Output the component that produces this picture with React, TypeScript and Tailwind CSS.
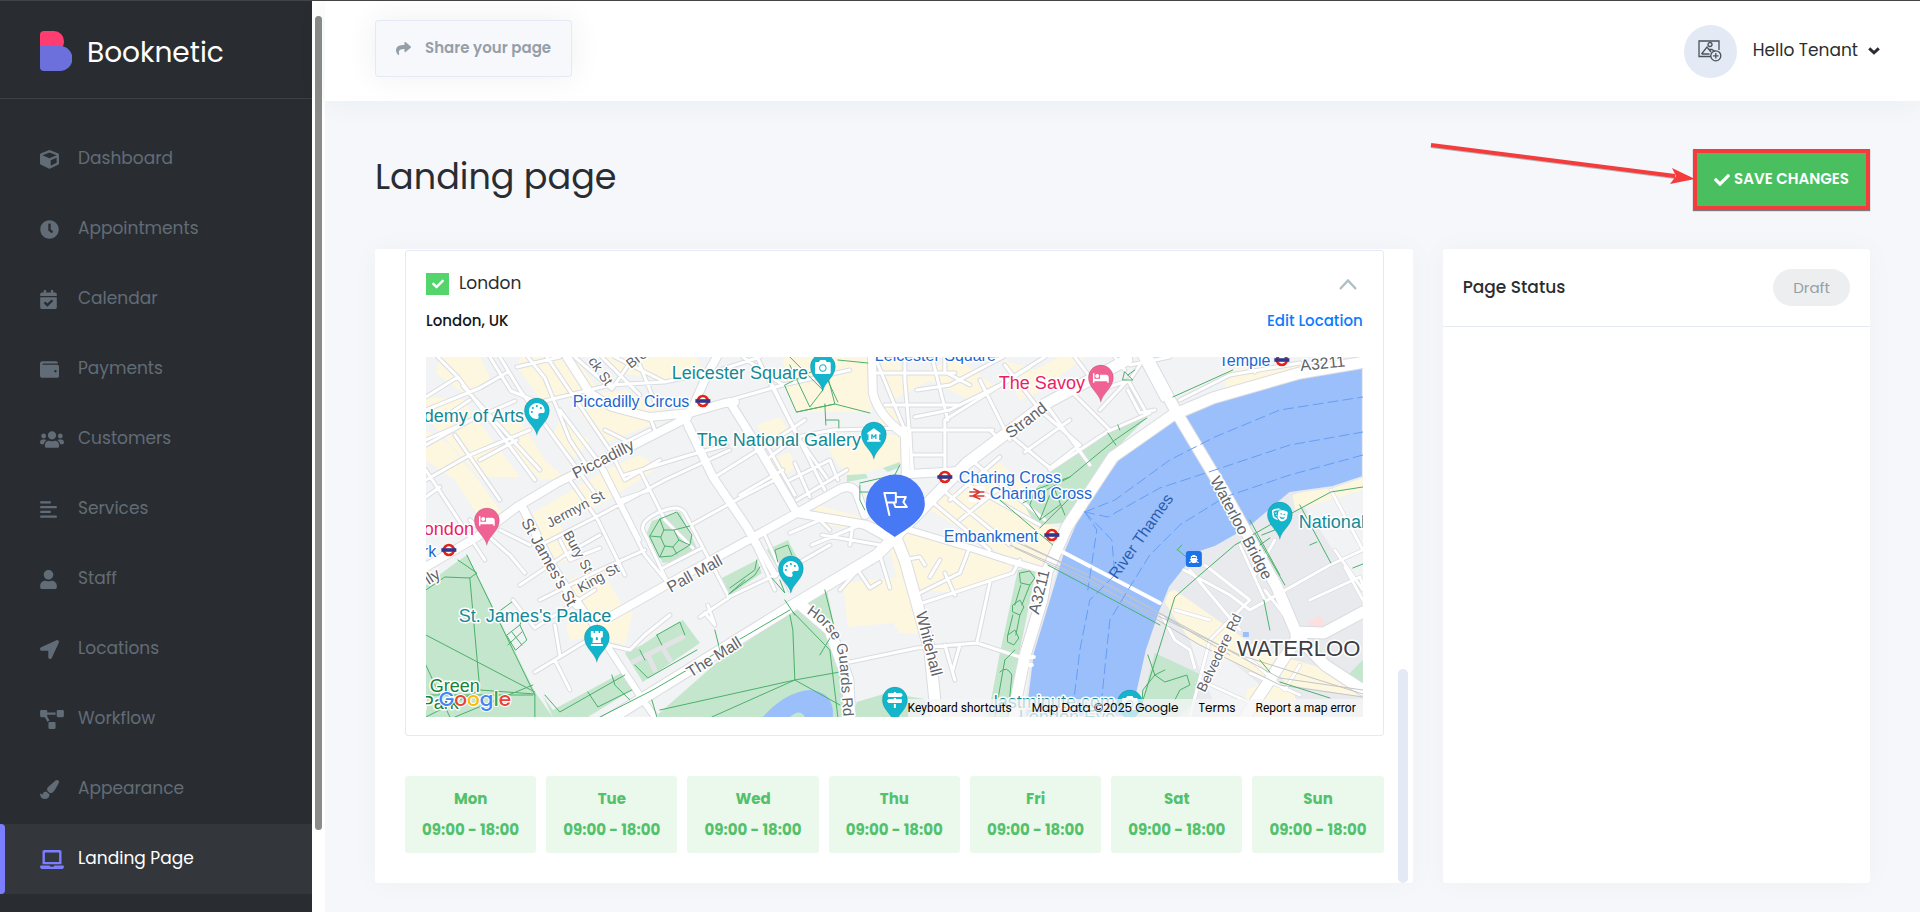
import React, { useState } from 'react';
import type { IconType } from 'react-icons';
import {
  FaAlignLeft,
  FaBed,
  FaCalendarCheck,
  FaCamera,
  FaCheck,
  FaChessRook,
  FaClock,
  FaCube,
  FaLaptop,
  FaLocationArrow,
  FaMapSigns,
  FaPaintBrush,
  FaPalette,
  FaProjectDiagram,
  FaShare,
  FaShip,
  FaTheaterMasks,
  FaUser,
  FaUsers,
  FaWallet,
} from 'react-icons/fa';
import { MdMuseum } from 'react-icons/md';

interface NavItem {
  label: string;
  icon: IconType;
  iconWidth: string;
}

const NAV_ITEMS: NavItem[] = [
  { label: 'Dashboard', icon: FaCube, iconWidth: 'w-[19px]' },
  { label: 'Appointments', icon: FaClock, iconWidth: 'w-[19px]' },
  { label: 'Calendar', icon: FaCalendarCheck, iconWidth: 'w-[17px]' },
  { label: 'Payments', icon: FaWallet, iconWidth: 'w-[19px]' },
  { label: 'Customers', icon: FaUsers, iconWidth: 'w-6' },
  { label: 'Services', icon: FaAlignLeft, iconWidth: 'w-[17px]' },
  { label: 'Staff', icon: FaUser, iconWidth: 'w-[17px]' },
  { label: 'Locations', icon: FaLocationArrow, iconWidth: 'w-[19px]' },
  { label: 'Workflow', icon: FaProjectDiagram, iconWidth: 'w-6' },
  { label: 'Appearance', icon: FaPaintBrush, iconWidth: 'w-[19px]' },
  { label: 'Landing Page', icon: FaLaptop, iconWidth: 'w-6' },
];

const WEEK_DAYS = ['Mon', 'Tue', 'Wed', 'Thu', 'Fri', 'Sat', 'Sun'];

const Logo = () => (
  <a href="#" className="flex items-center gap-[15px]">
    <svg width="32" height="40" viewBox="0 0 32 40" aria-hidden="true">
      <path d="M4 0h10a10 10 0 0 1 10 10c0 2-.4 4-1.400 6H0V4a4 4 0 0 1 4-4z" fill="#ff3d71" />
      <path d="M0 15h20a12.400 12.400 0 0 1 0 25H4a4 4 0 0 1-4-4z" fill="#6c70dc" />
    </svg>
    <span className="pt-1 text-[28px] leading-8 text-white">Booknetic</span>
  </a>
);

const Sidebar = ({ active, onSelect }: { active: string; onSelect: (_label: string) => void }) => (
  <aside className="flex shrink-0 bg-white">
    <div className="w-[312px] overflow-hidden bg-[#292d32]">
      <div className="flex h-[98px] items-center border-b border-[#3b4045] pb-3.5 pt-4 pl-10">
        <Logo />
      </div>
      <nav className="mt-[25px]">
        {NAV_ITEMS.map(({ label, icon: Icon, iconWidth }) => {
          const isActive = label === active;
          return (
            <a
              key={label}
              href="#"
              onClick={() => onSelect(label)}
              className={`relative flex h-[70px] items-center pl-10 text-[17px] ${
                isActive ? 'bg-[#33373c] text-white' : 'text-[#626c76]'
              }`}
            >
              {isActive && <span className="absolute inset-y-0 left-0 w-[5px] rounded-r bg-[#7b7fff]" />}
              <span className="w-[38px]">
                <Icon className={`h-[19px] ${iconWidth} ${isActive ? 'text-[#7b7fff]' : ''}`} />
              </span>
              {label}
            </a>
          );
        })}
      </nav>
    </div>
    <div className="w-[13px] pl-[3px] pt-[15px]">
      <div className="h-[814px] w-[7px] rounded-full bg-[#8b8b8b]" />
    </div>
  </aside>
);

const TopBar = () => (
  <header className="relative z-10 flex h-[100px] shrink-0 items-center justify-between bg-white pl-[50px] pr-10 shadow-[0_0_30px_rgba(41,45,50,0.060)]">
    <button className="mb-1.5 flex h-[57px] items-center gap-3.5 rounded-[3px] border border-[#e3eaf5] bg-[#f7f8fc] px-5 text-[15px] font-semibold text-[#949fa8] shadow-[0_0_30px_rgba(41,45,50,0.080)]">
      <FaShare className="size-[15px]" />
      Share your page
    </button>
    <button className="flex items-center gap-4 text-[17px] text-[#292d32]">
      <span className="flex size-[53px] items-center justify-center rounded-full bg-[#e3eaf5]">
        <svg width="24" height="22" viewBox="0 0 24 22" fill="none" stroke="#4b5158" strokeWidth="1.300">
          <path d="M13 16.500H1V1h20v9" />
          <path d="M3.500 14l5.500-7 4 5M3.500 14h8M11 9.500l3 0 3 2" />
          <circle cx="12" cy="4.500" r="2" />
          <circle cx="17.800" cy="15.800" r="5" />
          <path d="M17.800 13v5.600M15 15.800h5.600" />
        </svg>
      </span>
      <span className="flex items-center gap-2.5">
        Hello Tenant
        <svg width="12" height="8" viewBox="0 0 12 8" fill="none" stroke="currentColor" strokeWidth="3">
          <path d="M1.200 1.400L6 5.800l4.800-4.400" />
        </svg>
      </span>
    </button>
  </header>
);

// Map geometry, grouped by the way each kind of shape is painted
const PARKS = [
  'M426 585L450 567L467 555L485 590L535 692L553 717H426Z',
  'M827 590L800 606L720 660L655 717H848L845 680L836 635Z',
  'M647 533L652 521L680 512L697 548L683 560L663 563Z',
  'M722 578L757 560L762 573L730 595Z',
  'M767 550L788 540L800 563L777 567Z',
  'M657 635L683 620L700 643L643 682L625 653L642 645Z',
  'M543 696L553 710L623 672L637 687L588 717H553Z',
  'M1147 417L1107 430L1053 470L1023 503L1036 525L1063 523L1087 493L1113 452Z',
  'M1018 570L1037 567L1020 650L1008 717H988L1000 653Z',
  'M1155 653L1202 675L1195 702L1178 717H1138Z',
  'M857 702L887 693L925 699V717H852Z',
  'M1343 680L1363 660V682L1350 684Z',
  'M847 475L866 474L868 478L847 482ZM883 468L900 462V467L888 472Z',
].join('');

const COMMERCIAL = [
  'M440 357H480L492 382L462 392L436 373Z',
  'M426 397L463 400L520 477H480L426 417Z',
  'M426 430L450 445L478 480L505 517L482 522L455 480L426 460Z',
  'M521 357H574L597 387L545 405L517 367Z',
  'M570 397L625 390L672 417L604 443L585 420Z',
  'M596 357H697L703 373L665 382L620 372Z',
  'M783 357H870L872 412L797 412L786 390Z',
  'M827 443L907 433L902 463L848 477L833 457Z',
  'M533 513L610 468L640 455L658 468L600 505L560 523L574 560L553 563Z',
  'M570 580L600 567L625 610L603 620L583 610L568 592Z',
  'M566 625L585 615L633 612L625 645L595 637L570 640Z',
  'M957 490L1000 463L1020 480L1040 522L1060 528L1047 567L1000 553L925 507Z',
  'M903 533L1013 557L1010 573L960 593L920 590L907 567Z',
  'M843 583L900 577L913 603L920 634L900 633L893 623L848 627Z',
  'M888 543L900 547L917 603L903 600Z',
  'M817 505L865 518L850 529L812 522Z',
  'M880 357H897L905 378L930 370L955 357L1000 390L970 400L930 380L893 400Z',
  'M873 395L893 410L905 433L880 425Z',
  'M560 420L590 440L575 458L552 437Z',
  'M490 425L520 420L545 460L565 478L540 480Z',
  'M757 425L780 417L795 440L768 447Z',
  'M770 460L790 452L795 468L777 480Z',
  'M1003 360L1035 370L1060 357H1085L1040 392L1020 400Z',
  'M1293 495L1363 470V490L1295 510Z',
  'M1160 595L1190 640L1270 682L1363 697V680L1260 650L1175 590Z',
  'M1247 690L1280 675L1297 700L1285 717H1243Z',
  'M1225 370L1363 358V365L1290 372L1225 392Z',
].join('');

const RIVER =
  'M1363 367L1297 373L1230 393L1183 413L1120 457L1080 513L1063 553L1053 587L1033 653L1025 717H1133L1138 690L1147 650L1160 612L1170 587L1197 553L1215 547L1250 527L1290 493L1333 487L1363 477Z';

const SOUTH_BANK =
  'M1363 477L1333 487L1290 493L1250 527L1197 553L1170 587L1147 650L1133 717H1363Z';

const MINOR_ROADS = [
  'M438 357L458 377L426 397M490 357L511 391L546 405M458 377L535 480M426 410L480 388L508 372M426 440L515 401',
  'M463 386L540 470M500 357L520 390L600 500M517 367L560 357M528 357L545 378L570 440L590 470',
  'M545 401L610 385L665 382L707 373M602 357L640 395M615 357L665 382M575 357L612 389L634 357M640 365L655 402',
  'M426 445L480 415M426 480L470 455L530 430M455 435L500 500M480 460L517 440',
  'M426 470L485 560M426 497L440 487M470 400L440 420M547 357L610 450L625 480M560 410L605 470L640 540',
  'M605 430L625 440L615 460M610 450L650 430M625 480L660 460M650 417L655 430M723 402L783 385L850 370',
  'M757 357L825 490M743 357L783 385M770 380L800 440L827 478M720 370L760 357',
  'M715 477L790 430M740 495L783 470M760 450L805 420M797 500L847 470',
  'M770 457L797 437L833 430L907 428M790 480L830 460L838 480M795 463L810 497M768 447L795 495',
  'M570 480L598 520L625 575M598 463L645 555L668 583M625 475L690 455L727 445M545 543L600 515L665 480L730 450',
  'M520 585L565 555L600 535M560 540L570 560L600 548M540 600L600 570L645 550M640 470L665 520L693 548',
  'M643 530C640 520 660 510 675 508Q683 508 686 515L729 597L790 568L830 545M643 530L668 583M663 568L702 548',
  'M693 524L740 498L775 480M620 500L650 490M470 520L510 555L525 573M500 530L530 545',
  'M513 600L535 628L595 590M535 672L588 640L630 650L645 635L670 615M535 672L555 660L570 690M555 625L560 655',
  'M700 617L730 597M705 613L715 625L708 605M750 535L775 590M765 535L790 590',
  'M790 533L820 520L830 530M812 545L860 525L887 540M822 535L880 545M853 525L850 545M840 590L858 570L870 588L880 582M880 555L890 588',
  'M850 662L917 648L977 643L1020 657M990 583L977 643M920 593L960 573L970 547M917 605L1013 573L1020 560',
  'M902 560L920 557L925 565M945 645L955 680M960 645L953 670M945 573L955 595M930 577L940 560',
  'M874 373L955 373M905 357V380L913 473M932 357L948 420M917 390L950 385L1003 357M875 357L905 430M885 405L960 405M945 357V372L970 385',
  'M915 417L950 410L1000 385L1045 357M945 447V420L993 390L1030 367M907 430H993M913 455H945M912 473L910 430M945 430V473M990 430L1000 440',
  'M980 380L1010 440M1005 365L1040 410L1080 445L1050 468M1010 435L1050 468M1025 452L1070 420M1045 403L1090 465M1065 385L1110 430',
  'M1050 470L1107 432L1150 413M1075 357L1100 390L1130 380L1140 365M1100 410L1128 380L1145 410M1128 390L1140 413L1155 410',
  'M930 500L990 550M943 490L1010 545M960 480L1040 525M975 463L1045 520M950 500L1000 457M960 520L1010 480',
  'M1243 357L1255 372M1130 365L1170 357M1180 400L1230 375L1300 363M1140 357L1163 400M1115 357L1125 370',
].join('');

const SOUTH_ROADS = [
  'M1184 570L1230 595L1250 610L1330 565L1363 550M1250 600L1210 640L1190 717M1265 590L1300 635M1240 545L1265 600M1205 565L1250 600',
  'M1190 570L1240 630M1162 615L1175 640L1190 650L1195 668M1245 655L1285 690L1300 665M1310 600L1360 577L1363 585M1335 550L1363 590',
  'M1331 490L1363 550M1345 567L1363 600M1255 575L1275 540M1175 610L1210 620M1250 673L1300 695M1200 680L1255 705',
].join('');

const MAIN_ROADS = [
  'M426 567L477 537L517 507L557 483L630 447L687 418L693 407L708 373L717 357M567 357L590 393L612 407L650 417L690 413',
  'M690 413L725 403L735 402M730 402L760 450L797 513M688 425L713 477L747 527L757 545M523 508L553 567L577 605',
  'M610 617L670 583L743 543L797 513L840 489Q852 484 857 493L865 515M797 513L867 525L893 537',
  'M872 357L873 393Q878 415 905 435L906 473L900 500M910 474L960 471',
].join('');

const SIDE_ROADS = 'M577 600L643 700L655 717M757 543L775 575M900 527L967 547L1007 560L1048 572';

const ARTERIES = [
  'M605 722L797 603L877 555L900 532L967 463L1047 403L1127 360',
  'M893 530L905 560L917 603L930 650L937 720M1365 362L1300 373L1213 398L1173 415L1113 457L1067 527L1047 572L1042 600L1025 656L1012 720',
  'M1147 357L1177 413L1223 490L1277 587L1296 632L1324 633L1363 612M1296 635L1325 665L1363 690M1296 640L1270 680L1243 720M800 604L830 630L848 680L850 720',
].join('');

const FOOTPATHS = [
  'M426 590L445 577L470 578L477 573L458 560M470 578L480 690M467 555L535 695M535 692L426 635M533 695H426M535 695V717M480 690L426 717M426 665L450 717M480 690L535 694M455 717L533 685',
  'M497 613L512 602M507 635L520 625L527 640L516 650ZM512 632L522 645M508 645L522 632M520 625L523 618',
  'M790 610L653 690L600 717M785 600L795 615M793 612L830 650L838 717M790 615L793 630L795 680L712 717M795 680L660 710M795 680L840 672M795 680L840 705M825 590L835 630L820 655M652 700L657 717',
  'M729 594L755 575L760 567M729 594L745 580M730 588L755 570L757 560M778 562L775 550L788 545L792 555M780 580L785 593L772 578M715 630L720 650',
  'M650 536L660 519L677 512L692 535L690 545L672 556L660 557ZM661 537L664 530L674 530L679 540L673 547L665 546ZM664 530L660 519M674 530L690 526M679 540L690 545M673 547L677 554M665 546L660 557M661 537L650 536',
  'M657 635L680 622L685 635M657 635L662 645M640 650L645 660M635 665L648 678L697 650M545 695L560 712L625 675M588 692L598 707L632 690M612 675L615 685L630 700',
  'M785 385L825 365L835 404L797 412ZM790 365L810 407L823 390L790 357M797 412L835 404L870 413M823 370L838 402M825 404L826 425M826 420H839V428M838 360L868 363',
  'M860 483L895 475L900 465M860 485V500L865 510M860 492H868',
  'M1147 418L1115 440L1070 477L1023 503M1108 433L1116 445M1070 477L1035 490L1030 505L1040 520L1060 505M1050 495L1040 520M1055 490L1065 515M1040 528L1073 495M1000 500L1053 545M1120 430L1118 425',
  'M1020 573L1030 571L1035 578L1030 585L1021 583ZM1021 585L1015 605M1030 585L1022 605M1013 605L1020 600L1024 607L1020 615L1013 612ZM1013 615L1008 635M1020 615L1016 635M1008 635L1015 630L1019 638L1014 645L1008 642ZM1005 660L995 717M1000 672Q1007 665 1012 675L1008 717M1015 650L1005 660',
  'M1048 565L1160 625M1173 397L1233 370M1125 372L1133 380L1123 380ZM1135 370L1128 375',
  'M1363 487L1331 492L1270 525L1235 545L1200 575L1175 597L1162 640L1140 710M1280 575L1250 520M1300 505L1331 563M1255 533L1285 585M1262 535L1275 530M1260 545L1270 538M1310 545L1317 542M1353 568L1363 564',
  'M1148 655L1155 675L1143 690L1142 705M1155 675L1165 682L1187 675L1190 685L1180 690L1175 700M1165 670L1155 675M1178 550L1190 560M1182 545L1177 550M1264 600L1270 630M1260 660L1270 672M1280 682L1330 698',
].join('');

const BOAT_ROUTES = [
  'M1085 512L1115 500L1170 460L1215 437L1280 410L1363 397M1085 512L1108 517L1160 488L1215 470L1290 445L1363 432M1085 512L1097 530L1088 590',
  'M1363 455L1290 475L1225 497L1180 525L1150 555L1130 587L1110 620L1100 717M1085 512L1112 540L1115 575L1090 600L1080 650L1072 717M1363 450',
].join('');

const RAIL = [
  'M1010 545L1090 580L1200 645L1280 685L1363 697M1012 540L1090 576L1210 640L1280 678L1363 690M1015 548L1100 588L1240 655L1363 694M1025 545L1120 590L1230 655',
].join('');

interface PinProps {
  x: number;
  y: number;
  icon: IconType;
  color?: string;
}

const Pin = ({ x, y, icon: Icon, color = '#12b5cb' }: PinProps) => (
  <g transform={`translate(${x} ${y})`}>
    <path
      d="M0 24C-2 15-12.500 10-12.500-.500a12.500 12.500 0 0 1 25 0C12.500 10 2 15 0 24z"
      fill={color}
      stroke="#000"
      strokeOpacity=".2"
      strokeWidth=".6"
    />
    <Icon x={-8} y={-8} size={16} color="#fff" />
  </g>
);

const Tube = ({ x, y }: { x: number; y: number }) => (
  <g transform={`translate(${x} ${y})`}>
    <circle r="5" fill="#fff" stroke="#e1251b" strokeWidth="2.600" />
    <rect x="-7.500" y="-1.800" width="15" height="3.600" fill="#33378c" />
  </g>
);

interface StreetLabel {
  text: string;
  x: number;
  y: number;
  angle: number;
  small?: boolean;
}

const STREETS: StreetLabel[] = [
  { text: 'Piccadilly', x: 576, y: 479, angle: -27 },
  { text: 'lly', x: 429, y: 585, angle: -33 },
  { text: 'ck St', x: 588, y: 361, angle: 55, small: true },
  { text: 'Bre', x: 631, y: 369, angle: -38, small: true },
  { text: "St James's St", x: 521, y: 522, angle: 61 },
  { text: 'Jermyn St', x: 550, y: 528, angle: -28, small: true },
  { text: 'Bury St', x: 563, y: 534, angle: 61, small: true },
  { text: 'King St', x: 581, y: 593, angle: -29, small: true },
  { text: 'Pall Mall', x: 671, y: 593, angle: -29 },
  { text: 'The Mall', x: 691, y: 678, angle: -32 },
  { text: 'Strand', x: 1011, y: 439, angle: -38 },
  { text: 'Whitehall', x: 916, y: 613, angle: 76 },
  { text: 'A3211', x: 1039, y: 615, angle: -76 },
  { text: 'A3211', x: 1301, y: 371, angle: -6 },
  { text: 'Waterloo Bridge', x: 1210, y: 480, angle: 62 },
  { text: 'Belvedere Rd', x: 1205, y: 693, angle: -64, small: true },
];

interface PlaceLabel {
  text: string;
  x: number;
  y: number;
}

const ATTRACTIONS: PlaceLabel[] = [
  { text: 'Leicester Square', x: 672, y: 379 },
  { text: 'demy of Arts', x: 424, y: 422 },
  { text: 'The National Gallery', x: 697, y: 446 },
  { text: "St. James's Palace", x: 459, y: 622 },
  { text: 'National', x: 1299, y: 528 },
  { text: 'lastminute.com', x: 994, y: 708 },
  { text: 'London Eye', x: 1019, y: 723 },
];

const STATIONS: PlaceLabel[] = [
  { text: 'Piccadilly Circus', x: 573, y: 407 },
  { text: 'Leicester Square', x: 875, y: 361 },
  { text: 'Charing Cross', x: 959, y: 483 },
  { text: 'Charing Cross', x: 990, y: 499 },
  { text: 'Embankment', x: 944, y: 542 },
  { text: 'Temple', x: 1219, y: 366 },
  { text: 'rk', x: 423, y: 557 },
];

const HOTELS: PlaceLabel[] = [
  { text: 'The Savoy', x: 999, y: 389 },
  { text: 'ondon', x: 424, y: 535 },
];

const LondonMap = () => (
  <svg
    viewBox="426 357 937 360"
    preserveAspectRatio="xMidYMid slice"
    className="h-[360px] w-full font-['Liberation_Sans',sans-serif]"
    strokeLinejoin="round"
    strokeLinecap="round"
    role="img"
    aria-label="Map of London"
  >
    <rect x="426" y="357" width="937" height="360" fill="#f1f3f4" />
    <path d={SOUTH_BANK} fill="#e8eaed" />
    <path d="M1363 477L1300 500L1340 560L1363 600ZM1190 640L1200 670L1220 717H1300L1230 660Z" fill="#f1f3f4" />
    <path d={COMMERCIAL} fill="#fef7e0" />
    <path d={PARKS} fill="#c3e6cd" />
    <path d="M763 717Q785 692 810 690Q835 692 833 717H805Q800 708 790 717Z" fill="#9bbffb" />
    <path d={RIVER} fill="#9bbffb" stroke="#e8eaed" strokeWidth="2" />
    <path d="M1308 622L1320 615L1327 626L1315 632Z" fill="#fce0e0" />
    <rect x="1243" y="632" width="6" height="5" fill="#9bbffb" />

    <g fill="none">
      <path d={MINOR_ROADS} stroke="#dadce0" strokeWidth="5" />
      <path d={SOUTH_ROADS} stroke="#d5d7dc" strokeWidth="4" />
      <path d={SIDE_ROADS} stroke="#dadce0" strokeWidth="8" />
      <path d={MAIN_ROADS} stroke="#dadce0" strokeWidth="10" />
      <path d={ARTERIES} stroke="#dadce0" strokeWidth="13" />
      <path d={MINOR_ROADS} stroke="#fff" strokeWidth="3" />
      <path d={SOUTH_ROADS} stroke="#fff" strokeWidth="3" />
      <path d="M633 662L683 637M648 655L655 670M663 648L670 660" stroke="#e3e3e6" strokeWidth="5" />
      <path d="M1063 552L1160 603M1025 657H1034M1024 665H1032" stroke="#fff" strokeWidth="4" />
      <path d={SIDE_ROADS} stroke="#fff" strokeWidth="6" />
      <path d={MAIN_ROADS} stroke="#fff" strokeWidth="8" />
      <path d={ARTERIES} stroke="#fff" strokeWidth="11" />
      <path d={RAIL} stroke="#c2c4c8" strokeWidth="1" />
      <path d={FOOTPATHS} stroke="#4db06c" strokeWidth="1" />
      <path d={BOAT_ROUTES} stroke="#669df6" strokeWidth="1" strokeDasharray="10 5" />
    </g>

    <g fill="#5f6368" stroke="#fff" strokeWidth="3" className="[paint-order:stroke]">
      {STREETS.map(({ text, x, y, angle, small }) => (
        <text
          key={`${text}-${x}`}
          transform={`translate(${x} ${y}) rotate(${angle})`}
          className={small ? 'text-[14px]' : 'text-[16px]'}
        >
          {text}
        </text>
      ))}
      <path id="horse-guards" d="M806 613Q838 632 840 665T845 735" fill="none" stroke="none" />
      <text className="text-[15px]">
        <textPath href="#horse-guards">Horse Guards Rd</textPath>
      </text>
      <text x="1237" y="656" className="text-[22px]" fill="#3c4043">
        WATERLOO
      </text>
    </g>
    <text transform="translate(1117 580) rotate(-55)" className="text-[16px]" fill="#2a5db0">
      River Thames
    </text>

    <g stroke="#fff" strokeWidth="3" className="text-[18px] [paint-order:stroke]">
      <g fill="#138a96">
        {ATTRACTIONS.map((place) => (
          <text key={place.text} x={place.x} y={place.y}>
            {place.text}
          </text>
        ))}
      </g>
      <g fill="#e91e63">
        {HOTELS.map((place) => (
          <text key={place.text} x={place.x} y={place.y}>
            {place.text}
          </text>
        ))}
      </g>
      <g fill="#188038">
        <text x="430" y="692">Green</text>
        <text x="422" y="709">Park</text>
      </g>
      <g fill="#1a67d2" className="text-[16px]">
        {STATIONS.map((place) => (
          <text key={`${place.text}-${place.x}`} x={place.x} y={place.y}>
            {place.text}
          </text>
        ))}
      </g>
    </g>

    <Tube x={703} y={401} />
    <Tube x={449} y={550} />
    <Tube x={945} y={477} />
    <Tube x={1052} y={535} />
    <Tube x={1282} y={360} />
    <rect x="969" y="486" width="16" height="16" rx="3" fill="#fff" />
    <path d="M970 492H984M970 496H984M974 489L980 492L973 496L980 499" fill="none" stroke="#dc3b33" strokeWidth="1.600" />
    <rect x="1186" y="551" width="16" height="16" rx="3" fill="#1a73e8" />
    <FaShip x={1189} y={554} size={10} color="#fff" />

    <Pin x={537} y={411} icon={FaPalette} />
    <Pin x={791} y={569} icon={FaPalette} />
    <Pin x={823} y={367} icon={FaCamera} />
    <Pin x={874} y={435} icon={MdMuseum} />
    <Pin x={597} y={638} icon={FaChessRook} />
    <Pin x={1280} y={515} icon={FaTheaterMasks} />
    <Pin x={1130} y={703} icon={FaCamera} />
    <Pin x={895} y={700} icon={FaMapSigns} />
    <Pin x={1101} y={378} icon={FaBed} color="#f06292" />
    <Pin x={487} y={521} icon={FaBed} color="#f06292" />

    <path d="M895 537C885 530 866 520 866 504a29.400 29.400 0 0 1 59 0C925 520 905 530 895 537z" fill="#4879f5" />
    <path
      d="M889.500 515L884.500 493H896V502.500H887M896.500 497H906L903.500 502L907 507H895.500L894 503"
      fill="none"
      stroke="#fff"
      strokeWidth="2"
    />

    <text
      x="439"
      y="706"
      className="font-['Poppins','Inter',sans-serif] text-[20px] font-medium [paint-order:stroke]"
      stroke="#fff"
      strokeWidth="2"
    >
      <tspan fill="#4285f4">G</tspan>
      <tspan fill="#ea4335">o</tspan>
      <tspan fill="#fbbc04">o</tspan>
      <tspan fill="#4285f4">g</tspan>
      <tspan fill="#34a853">l</tspan>
      <tspan fill="#ea4335">e</tspan>
    </text>
  </svg>
);

const LocationCard = () => {
  const [enabled, setEnabled] = useState(true);

  return (
    <section className="mt-px rounded-[3px] border border-[#e3eaf5] px-5 pb-[18px] pt-[17px]">
      <div className="flex h-8 items-center justify-between">
        <label className="flex items-center gap-2.5 text-[17px] text-[#292d32]">
          <span className="relative flex h-[22px] w-[23px]">
            <input
              type="checkbox"
              checked={enabled}
              onChange={(e) => setEnabled(e.target.checked)}
              className="size-full appearance-none border border-[#53d56c] checked:bg-[#53d56c]"
            />
            {enabled && <FaCheck className="pointer-events-none absolute inset-0 m-auto size-3 text-white" />}
          </span>
          London
        </label>
        <button aria-label="Collapse" className="mr-1.5 text-[#adbfc7]">
          <svg width="18" height="11" viewBox="0 0 18 11" fill="none" stroke="currentColor" strokeWidth="2.400">
            <path d="M1 10l8-8.500L17 10" />
          </svg>
        </button>
      </div>
      <div className="mb-6 mt-[9px] flex h-6 items-center justify-between text-[15px] font-medium">
        <span className="text-[#14171a]">London, UK</span>
        <a href="#" className="text-[#0a7cff]">
          Edit Location
        </a>
      </div>
      <div className="relative overflow-hidden">
        <LondonMap />
        <div className="absolute bottom-0 right-0 flex h-[18px] items-center gap-5 bg-[#f5f5f5]/75 pr-[7px] text-[12px] text-black">
          <button className="font-['Roboto',sans-serif]">Keyboard shortcuts</button>
          <span>Map Data ©2025 Google</span>
          <a href="#">Terms</a>
          <a href="#" className="font-['Roboto',sans-serif]">
            Report a map error
          </a>
        </div>
      </div>
    </section>
  );
};

const App: React.FC = () => {
  const [page, setPage] = useState('Landing Page');

  return (
    <div className="flex h-screen overflow-hidden border-t border-[#444446] bg-[#f5f7fb] font-['Poppins','Inter',sans-serif]">
      <Sidebar active={page} onSelect={setPage} />
      <div className="flex min-w-0 flex-1 flex-col">
        <TopBar />
        <main className="flex min-h-0 flex-1 flex-col px-[50px] pb-[29px] pt-12">
          <div className="flex items-center justify-between">
            <h1 className="pb-1.5 text-[35px] leading-[48px] text-[#292d32]">Landing page</h1>
            <div className="relative border-4 border-[#f43c3c] shadow-[0_1px_1px_rgba(0,0,0,0.500)]">
              <svg
                width="266"
                height="50"
                viewBox="0 0 266 50"
                className="absolute right-full -top-3 mr-0.5"
                aria-hidden="true"
              >
                <path d="M2 5L246 36" stroke="#777" strokeWidth="4" opacity=".5" />
                <path d="M2 4L246 35" stroke="#f43c3c" strokeWidth="4" />
                <path d="M266 38L243 27l4 8-6 8z" fill="#f43c3c" />
              </svg>
              <button className="flex h-[53px] w-[169px] items-center justify-center gap-1 bg-[#4abf60] text-[15px] font-semibold text-white">
                <FaCheck className="size-4" />
                SAVE CHANGES
              </button>
            </div>
          </div>

          <div className="mt-[39px] grid min-h-0 flex-1 grid-cols-[17fr_7fr] gap-[30px]">
            <div className="flex min-h-0 overflow-hidden rounded-[3px] bg-white pl-[30px] pr-[5px] shadow-[0_0_30px_rgba(41,45,50,0.030)]">
              <div className="min-w-0 flex-1">
                <LocationCard />
                <div className="mt-10 grid grid-cols-7 gap-2.5">
                  {WEEK_DAYS.map((day) => (
                    <div
                      key={day}
                      className="flex h-[77px] flex-col items-center justify-center gap-2 rounded-[3px] bg-[#ebf9ed] text-[15px] font-bold text-[#53c16b]"
                    >
                      <span>{day}</span>
                      <span>09:00 - 18:00</span>
                    </div>
                  ))}
                </div>
              </div>
              <div className="ml-3.5 h-[214px] w-2.5 self-end rounded-full bg-[#e3eaf5]" />
            </div>

            <aside className="rounded-[3px] bg-white shadow-[0_0_30px_rgba(41,45,50,0.030)]">
              <div className="flex h-[78px] items-center justify-between border-b border-[#e5ebf0] px-5">
                <h2 className="text-[17px] font-medium text-[#292d32]">Page Status</h2>
                <span className="rounded-full bg-[#edeeef] px-5 py-2 text-[15px] leading-[21px] text-[#949fa8]">
                  Draft
                </span>
              </div>
            </aside>
          </div>
        </main>
      </div>
    </div>
  );
};

export default App;
